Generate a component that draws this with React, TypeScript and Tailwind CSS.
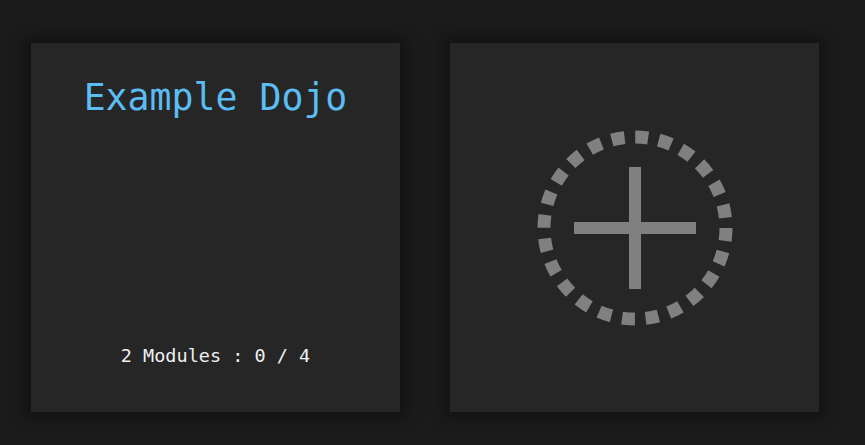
import React from 'react'

type Dojo = {
  name: string
  modules: number
  done: number
  total: number
}

const dojos: Dojo[] = [{ name: 'Example Dojo', modules: 2, done: 0, total: 4 }]

function DojoCard({ dojo }: { dojo: Dojo }) {
  return (
    <div className="w-[369px] h-[369px] bg-[#262626] shadow-[0_0_14px_6px_rgba(0,0,0,0.35)] flex flex-col items-center justify-between pt-[35px] pb-[44px] cursor-pointer">
      <h2 className="text-[36.5px] leading-[40px] text-[#5cbdf2]">{dojo.name}</h2>
      <p className="text-[18.5px] leading-[24px] text-[#f0f0f0]">
        {dojo.modules} Modules : {dojo.done} / {dojo.total}
      </p>
    </div>
  )
}

function AddCard() {
  return (
    <button className="w-[369px] h-[369px] bg-[#262626] shadow-[0_0_14px_6px_rgba(0,0,0,0.35)] flex items-center justify-center">
      <svg width="200" height="200" viewBox="0 0 200 200">
        <circle
          cx="100"
          cy="100"
          r="91"
          fill="none"
          stroke="#808080"
          strokeWidth="13"
          strokeDasharray="13 10.8"
        />
        <rect x="94" y="39" width="12" height="122" fill="#808080" />
        <rect x="39" y="94" width="122" height="12" fill="#808080" />
      </svg>
    </button>
  )
}

export default function App() {
  return (
    <div
      className="w-[865px] h-[445px] bg-[#1b1b1b] overflow-hidden"
      style={{ fontFamily: '"DejaVu Sans Mono", "Liberation Mono", monospace' }}
    >
      <div className="flex gap-[50px] pl-[31px] pt-[43px]">
        {dojos.map((dojo) => (
          <DojoCard key={dojo.name} dojo={dojo} />
        ))}
        <AddCard />
      </div>
    </div>
  )
}
